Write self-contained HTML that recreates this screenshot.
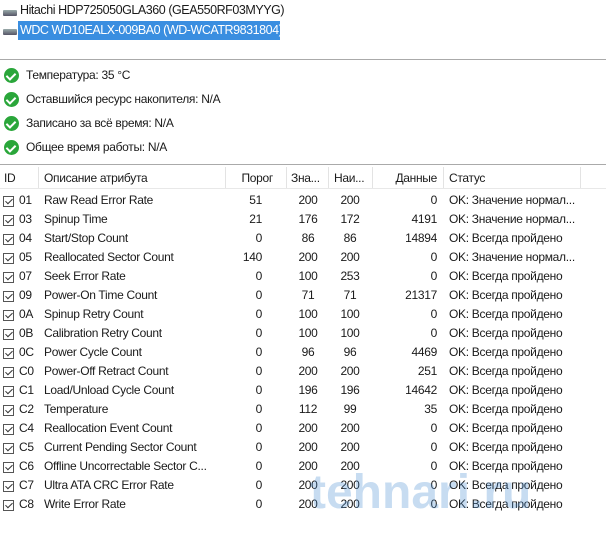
<!DOCTYPE html>
<html><head><meta charset="utf-8"><style>
body{margin:0;width:606px;height:538px;background:#fff;font-family:"Liberation Sans","Noto Sans CJK SC",sans-serif;font-size:12px;letter-spacing:-0.3px;color:#1a1a1a;position:relative;overflow:hidden}
.a{position:absolute;white-space:nowrap}
.hdd{position:absolute;left:3px;width:14px;height:6px;background:linear-gradient(#9aa,#556);border-radius:1px}
.ok{position:absolute;left:4px;width:15px;height:15px;border-radius:50%;background:#2aa63a}
.ok:after{content:"";position:absolute;left:4px;top:3px;width:4px;height:7px;border:solid #fff;border-width:0 2px 2px 0;transform:rotate(45deg)}
.cb{position:absolute;left:3px;width:11px;height:11px;border:1px solid #555;background:#fff;box-sizing:border-box}
.cb:after{content:"";position:absolute;left:3px;top:0px;width:3px;height:6px;border:solid #333;border-width:0 1.5px 1.5px 0;transform:rotate(45deg)}
.r{text-align:right}
.sep{position:absolute;top:167px;width:1px;height:21px;background:#e3e3e3}
.t{font-size:12.5px;letter-spacing:-0.45px}
</style></head><body>
<div class="hdd" style="top:10px"></div>
<div class="a t" style="left:20px;top:3px">Hitachi HDP725050GLA360 (GEA550RF03MYYG)</div>
<div class="hdd" style="top:29px"></div>
<div class="a" style="left:18px;top:21px;height:19px;width:262px;background:#3a8ee0"></div>
<div class="a t" style="left:20px;top:23px;color:#fff">WDC WD10EALX-009BA0 (WD-WCATR9831804)</div>
<div class="a" style="left:0;top:59px;width:606px;height:1px;background:#aaa"></div>
<div class="ok" style="top:68px"></div><div class="a" style="left:26px;top:68px">Температура: 35 °C</div>
<div class="ok" style="top:92px"></div><div class="a" style="left:26px;top:92px">Оставшийся ресурс накопителя: N/A</div>
<div class="ok" style="top:116px"></div><div class="a" style="left:26px;top:116px">Записано за всё время: N/A</div>
<div class="ok" style="top:140px"></div><div class="a" style="left:26px;top:140px">Общее время работы: N/A</div>
<div class="a" style="left:0;top:164px;width:606px;height:1px;background:#aaa"></div>
<div class="a" style="left:0;top:188px;width:606px;height:1px;background:#e8e8e8"></div>
<div class="sep" style="left:38px"></div><div class="sep" style="left:225px"></div><div class="sep" style="left:286px"></div><div class="sep" style="left:328px"></div><div class="sep" style="left:372px"></div><div class="sep" style="left:443px"></div><div class="sep" style="left:580px"></div>
<div class="a" style="left:4px;top:171px">ID</div>
<div class="a" style="left:44px;top:171px">Описание атрибута</div>
<div class="a r" style="left:225px;width:48px;top:171px">Порог</div>
<div class="a" style="left:291px;top:171px">Зна...</div>
<div class="a" style="left:334px;top:171px">Наи...</div>
<div class="a r" style="left:372px;width:65px;top:171px">Данные</div>
<div class="a" style="left:449px;top:171px">Статус</div>
<div id="rows"></div>
<script>
var d=[["01","Raw Read Error Rate",51,200,200,0,1],["03","Spinup Time",21,176,172,4191,1],["04","Start/Stop Count",0,86,86,14894,0],["05","Reallocated Sector Count",140,200,200,0,1],["07","Seek Error Rate",0,100,253,0,0],["09","Power-On Time Count",0,71,71,21317,0],["0A","Spinup Retry Count",0,100,100,0,0],["0B","Calibration Retry Count",0,100,100,0,0],["0C","Power Cycle Count",0,96,96,4469,0],["C0","Power-Off Retract Count",0,200,200,251,0],["C1","Load/Unload Cycle Count",0,196,196,14642,0],["C2","Temperature",0,112,99,35,0],["C4","Reallocation Event Count",0,200,200,0,0],["C5","Current Pending Sector Count",0,200,200,0,0],["C6","Offline Uncorrectable Sector C...",0,200,200,0,0],["C7","Ultra ATA CRC Error Rate",0,200,200,0,0],["C8","Write Error Rate",0,200,200,0,0]];
var h="";d.forEach(function(r,i){var t=193+i*19;
h+='<div class="cb" style="top:'+(t+3)+'px"></div><div class="a" style="left:19px;top:'+t+'px">'+r[0]+'</div><div class="a" style="left:44px;top:'+t+'px">'+r[1]+'</div><div class="a r" style="left:225px;width:37px;top:'+t+'px">'+r[2]+'</div><div class="a" style="left:288px;width:40px;text-align:center;top:'+t+'px">'+r[3]+'</div><div class="a" style="left:330px;width:40px;text-align:center;top:'+t+'px">'+r[4]+'</div><div class="a r" style="left:372px;width:65px;top:'+t+'px">'+r[5]+'</div><div class="a" style="left:449px;top:'+t+'px">'+(r[6]?'OK: Значение нормал...':'OK: Всегда пройдено')+'</div>';});
document.getElementById("rows").innerHTML=h;
</script>
<div class="a" style="left:310px;top:465px;font-size:48px;font-weight:bold;color:rgba(70,140,210,0.3);letter-spacing:0px">tehnari.ru</div>
</body></html>
